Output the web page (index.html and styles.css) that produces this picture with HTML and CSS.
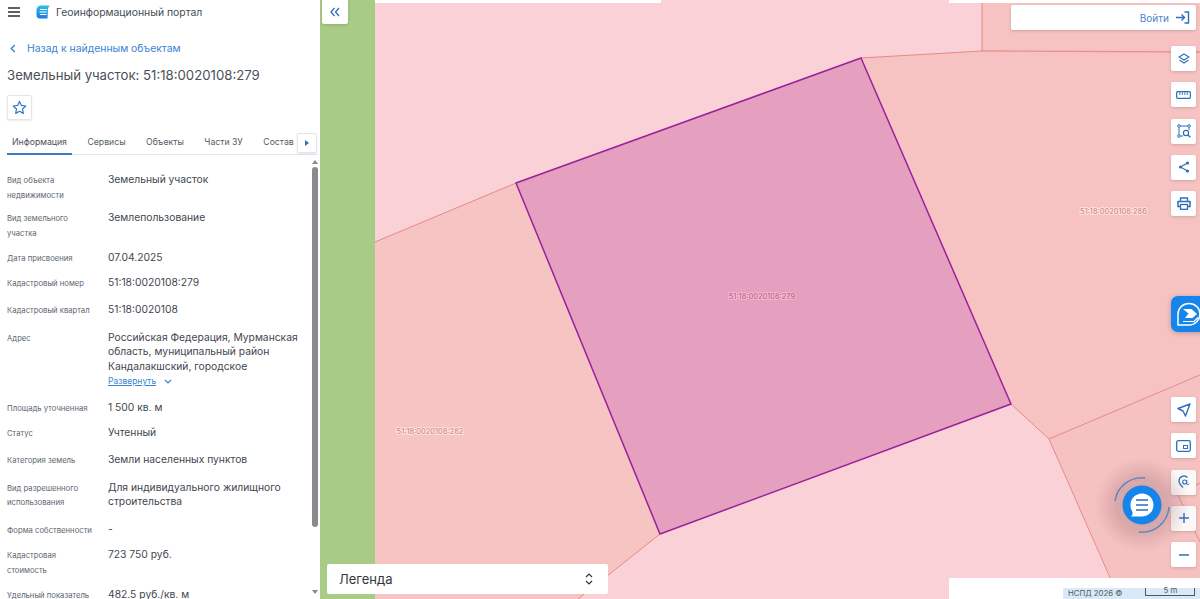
FILE: index.html
```html
<!DOCTYPE html><html lang="ru">
<head>
  <meta charset="UTF-8">
  <meta name="viewport" content="width=device-width, initial-scale=1">
  <title>Геоинформационный портал</title>
  <link rel="stylesheet" href="styles.css">
</head>
<body>
  <div class="app">
    <aside class="sidebar">
      <header class="topbar">
        <svg class="burger" viewBox="0 0 12 10" width="12" height="10"><path d="M0 1h12M0 5h12M0 9h12" stroke="#2b2f33" stroke-width="1.4"/></svg>
        <svg class="logo" viewBox="0 0 14 14" width="14" height="14">
          <defs><linearGradient id="lg" x1="0" y1="0" x2="0" y2="1"><stop offset="0" stop-color="#29c4e0"/><stop offset="1" stop-color="#1a78e0"/></linearGradient></defs>
          <path d="M5 .5h8.500L12 3.500 11.500 13.500H4C1.500 13.500.5 12 .5 10V5C.5 2.500 2.500.5 5 .5z" fill="url(#lg)"/>
          <path d="M4 4.500h7M3.500 7h7M4 9.500h6.500" stroke="#fff" stroke-width="1.100"/>
        </svg>
        <span class="portal-name">Геоинформационный портал</span>
      </header>

      <a class="back" href="#">
        <svg viewBox="0 0 6 10" width="6" height="9"><path d="M5 1 1 5l4 4" fill="none" stroke="#3a84d2" stroke-width="1.500"/></svg>
        Назад к найденным объектам
      </a>
      <h1 class="title">Земельный участок: 51:18:0020108:279</h1>
      <button class="star">
        <svg viewBox="0 0 16 16" width="15" height="15"><path d="M8 1.500l2 4.300 4.700.6-3.500 3.200.9 4.700L8 12l-4.100 2.300.9-4.700L1.300 6.400 6 5.800z" fill="none" stroke="#2f78c8" stroke-width="1.300" stroke-linejoin="round"/></svg>
      </button>

      <nav class="tabs">
        <span class="tab tab-active">Информация</span>
        <span class="tab">Сервисы</span>
        <span class="tab">Объекты</span>
        <span class="tab">Части ЗУ</span>
        <span class="tab">Состав</span>
        <button class="tab-next"><svg viewBox="0 0 4 6" width="4" height="6"><path d="M0 0l4 3-4 3z" fill="#2f6fb8"/></svg></button>
      </nav>

      <section class="info">
        <div class="row row-tight"><div class="label">Вид объекта недвижимости</div><div class="value">Земельный участок</div></div>
        <div class="row row-tight"><div class="label">Вид земельного участка</div><div class="value">Землепользование</div></div>
        <div class="row row-tight"><div class="label">Дата присвоения</div><div class="value">07.04.2025</div></div>
        <div class="row"><div class="label">Кадастровый номер</div><div class="value">51:18:0020108:279</div></div>
        <div class="row row-loose"><div class="label">Кадастровый квартал</div><div class="value">51:18:0020108</div></div>
        <div class="row row-tight">
          <div class="label">Адрес</div>
          <div class="value">Российская Федерация, Мурманская область, муниципальный район Кандалакшский, городское
            <a class="expand" href="#"><u>Развернуть</u><svg viewBox="0 0 8 5" width="8" height="5"><path d="M1 1l3 3 3-3" fill="none" stroke="#3a84d2" stroke-width="1.200"/></svg></a>
          </div>
        </div>
        <div class="row row-tight"><div class="label">Площадь уточненная</div><div class="value">1 500 кв. м</div></div>
        <div class="row"><div class="label">Статус</div><div class="value">Учтенный</div></div>
        <div class="row row-loose"><div class="label">Категория земель</div><div class="value">Земли населенных пунктов</div></div>
        <div class="row row-loose"><div class="label">Вид разрешенного использования</div><div class="value">Для индивидуального жилищного строительства</div></div>
        <div class="row row-tight"><div class="label">Форма собственности</div><div class="value">-</div></div>
        <div class="row row-tight"><div class="label">Кадастровая стоимость</div><div class="value">723 750 руб.</div></div>
        <div class="row"><div class="label">Удельный показатель</div><div class="value">482.5 руб./кв. м</div></div>
      </section>
      <div class="scroll-thumb"></div>
      <svg class="scroll-up" viewBox="0 0 6 4" width="6" height="4"><path d="M3 0l3 4H0z" fill="#8a8a8e"/></svg>
      <svg class="scroll-down" viewBox="0 0 6 4" width="6" height="4"><path d="M0 0h6L3 4z" fill="#8a8a8e"/></svg>
    </aside>

    <main class="map">
      <svg class="map-canvas" viewBox="320 0 880 599" width="880" height="599">
        <rect x="320" y="0" width="880" height="599" fill="#f9d1d6"/>
        <rect x="320" y="0" width="55" height="599" fill="#a8cc85"/>
        <path d="M375 242 516 183 660 534 578 599H375z" fill="#f6c4c2"/>
        <path d="M861 58 982 51 1200 52V375L1049 439 1011 404z" fill="#f6c3c2"/>
        <path d="M982 0H1200V52L982 51z" fill="#f6c3c2"/>
        <path d="M1049 439 1200 375V599H1120z" fill="#f6c2c1"/>
        <g fill="none" stroke="#e58a85" stroke-width="1">
          <path d="M375 242 516 183"/>
          <path d="M660 534 578 599"/>
          <path d="M861 58 982 51V0"/>
          <path d="M1011 404 1049 439 1200 375"/>
          <path d="M1049 439 1112 582"/>
          <path d="M1178 495 1200 542M1178 495 1200 483"/>
        </g>
        <path d="M982 51 1200 52" stroke="#ee8f8d" stroke-width="1.300"/>
        <path d="M861 58 1011 404 660 534 516 183z" fill="#e6a0bf" stroke="#9a209c" stroke-width="1.500"/>
        <text class="map-label label-main" x="762" y="299">51:18:0020108:279</text>
        <text class="map-label" x="1113.500" y="214">51:18:0020108:286</text>
        <text class="map-label" x="430" y="434">51:18:0020108:282</text>
      </svg>

      <div class="strip strip-left"></div>
      <div class="strip strip-right"></div>

      <button class="collapse">
        <svg viewBox="0 0 10 10" width="10" height="10"><path d="M4.500 1 1 5l3.500 4M9 1 5.500 5 9 9" fill="none" stroke="#2f6fb8" stroke-width="1.300"/></svg>
      </button>

      <a class="login" href="#">Войти
        <svg viewBox="0 0 14 13" width="14" height="13"><path d="M8.500 1h4v11h-4" fill="none" stroke="#2f6fb8" stroke-width="1.400"/><path d="M0 6.500h8.500M5.500 3.500l3 3-3 3" fill="none" stroke="#2f6fb8" stroke-width="1.400"/></svg>
      </a>

      <div class="tools tools-top">
        <button class="tool"><svg viewBox="0 0 12 12" width="12" height="12"><path d="M6 1l5 3-5 3-5-3zM1.500 7 6 10l4.500-3" fill="none" stroke="#2f6fb8" stroke-width="1.100"/></svg></button>
        <button class="tool"><svg viewBox="0 0 16 10" width="15" height="10"><rect x=".7" y="1.500" width="14.600" height="7" rx="1" fill="none" stroke="#2f6fb8" stroke-width="1.300"/><path d="M4 2v3M6.700 2v3M9.400 2v3M12 2v3" stroke="#2f6fb8"/></svg></button>
        <button class="tool"><svg viewBox="0 0 14 14" width="14" height="14"><g fill="none" stroke="#2f6fb8"><circle cx="2" cy="2" r="1.300"/><circle cx="12" cy="2" r="1.300"/><circle cx="2" cy="12" r="1.300"/><path d="M3.500 2h7M2 3.500v7M12 3.500V6M3.500 12H6"/><circle cx="9" cy="9" r="2.600" stroke-width="1.200"/><path d="M11 11l2.300 2.300" stroke-width="1.300"/></g></svg></button>
        <button class="tool"><svg viewBox="0 0 12 12" width="12" height="12"><path d="M9.500 2 2.500 6l7 4" fill="none" stroke="#2f6fb8" stroke-width="1.100"/><circle cx="9.500" cy="2" r="1.600" fill="#2f6fb8"/><circle cx="2.500" cy="6" r="1.600" fill="#2f6fb8"/><circle cx="9.500" cy="10" r="1.600" fill="#2f6fb8"/></svg></button>
        <button class="tool"><svg viewBox="0 0 14 13" width="14" height="13"><path d="M3.500 4V1h7v3" fill="none" stroke="#2f6fb8" stroke-width="1.300"/><path d="M3 9.500H1V4.500h12v5h-2" fill="none" stroke="#2f6fb8" stroke-width="1.500"/><rect x="3.500" y="7.500" width="7" height="4.800" fill="none" stroke="#2f6fb8" stroke-width="1.300"/></svg></button>
      </div>

      <div class="brand-tab">
        <svg viewBox="0 0 26 26" width="26" height="26">
          <path d="M3 24V13C3 7 8 2.500 14 2.500S25 7 25 13 20 24 14 24z" fill="none" stroke="#fff" stroke-width="1.500"/>
          <path d="M8 8h8.500l5.500 5-4.500 4H10l3.500-4.500z" fill="#fff"/>
          <path d="M8 20.500h11l4-4" fill="none" stroke="#fff" stroke-width="1.200"/>
        </svg>
      </div>

      <div class="tools tools-bottom">
        <button class="tool"><svg viewBox="0 0 14 14" width="14" height="14"><path d="M13 1 1 5.500 6 8l2.500 5z" fill="none" stroke="#2f6fb8" stroke-width="1.400" stroke-linejoin="round"/></svg></button>
        <button class="tool"><svg viewBox="0 0 15 12" width="15" height="12"><rect x=".7" y=".7" width="13.600" height="10.600" rx="1.500" fill="none" stroke="#2f6fb8" stroke-width="1.300"/><rect x="7.500" y="5.500" width="4" height="3" fill="none" stroke="#2f6fb8"/></svg></button>
        <button class="tool tool-soft"><svg viewBox="0 0 12 14" width="12" height="14"><path d="M9.500 2.500A5 5 0 0 0 1 6c0 2.500 2 4.500 4 6.500" fill="none" stroke="#2f6fb8" stroke-width="1.300"/><circle cx="6.700" cy="7" r="2" fill="none" stroke="#2f6fb8" stroke-width="1.100"/><path d="M8.700 5v3.500c0 1.500 2 1.500 2.300.2" fill="none" stroke="#2f6fb8"/></svg></button>
        <button class="tool tool-soft"><svg viewBox="0 0 10 10" width="10" height="10"><path d="M5 0v10M0 5h10" stroke="#2f6fb8" stroke-width="1.400"/></svg></button>
        <button class="tool"><svg viewBox="0 0 10 2" width="10" height="2"><path d="M0 1h10" stroke="#2f6fb8" stroke-width="1.500"/></svg></button>
      </div>

      <div class="chat">
        <svg viewBox="0 0 64 64" width="64" height="64">
          <circle cx="32" cy="32" r="23" fill="none" stroke="#c9b6bc" stroke-width="1"/>
          <path d="M5 28A27 27 0 0 1 35 5" fill="none" stroke="#4f82c8" stroke-width="1.300"/>
          <path d="M59 34A27 27 0 0 1 29 59" fill="none" stroke="#4f82c8" stroke-width="1.300"/>
          <circle cx="32" cy="32" r="19.500" fill="#1685ea"/>
          <path d="M32 20.500c6.600 0 11.500 5 11.500 11.500S38.600 43.500 32 43.500H21c1.500-1.300 1.800-2.500 1.500-4.500-1.300-2-2-4.300-2-7 0-6.500 5-11.500 11.500-11.500z" fill="#fff"/>
          <path d="M26 27h12M26 32h12M26 37h12" stroke="#2f6fb8" stroke-width="1.700"/>
        </svg>
      </div>

      <div class="legend">
        <span>Легенда</span>
        <svg viewBox="0 0 8 14" width="8" height="14"><path d="M1 5l3-3 3 3M1 9l3 3 3-3" fill="none" stroke="#33373b" stroke-width="1.200"/></svg>
      </div>

      <div class="attribution">
        <span>НСПД 2026 ©</span>
        <span class="scale">5 m</span>
      </div>
    </main>
  </div>
</body>
</html>
```

FILE: styles.css
```css
:root {
  --text-color: #3f4750;
  --label-color: #5d6670;
  --link-color: #3a84d2;
  --btn-shadow: 0 1px 3px rgba(90, 70, 80, 0.25);
}
* { box-sizing: border-box; margin: 0; padding: 0; }
html, body { height: 100%; overflow: hidden; }
body {
  font-family: Inter, "Noto Sans", sans-serif;
  color: var(--text-color);
  background: #fff;
}
button {
  border: none;
  background: #fff;
  font: inherit;
  display: flex;
  align-items: center;
  justify-content: center;
}
a { text-decoration: none; color: var(--link-color); }

.app { display: flex; height: 599px; }

/* left panel */
.sidebar {
  position: relative;
  width: 320px;
  flex: none;
  background: #fff;
  display: flex;
  flex-direction: column;
  overflow: hidden;
}
.topbar {
  display: flex;
  align-items: center;
  height: 24px;
  padding-left: 8px;
}
.burger { margin-right: 16px; }
.logo { margin-right: 6px; }
.portal-name { font-size: 10.400px; color: #444c55; }
.back {
  display: flex;
  align-items: center;
  gap: 11px;
  margin: 17px 0 0 10px;
  height: 14px;
  font-size: 10.400px;
}
.title {
  margin: 11px 0 0 7px;
  font-size: 13.200px;
  line-height: 18px;
  font-weight: 400;
  color: #4a5058;
  white-space: nowrap;
}
.star {
  width: 25px;
  height: 25px;
  flex: none;
  margin: 11px 0 0 7px;
  border: 1px solid #e2e6ea;
  border-radius: 2px;
  box-shadow: 0 1px 2px rgba(0, 0, 0, 0.08);
}
.tabs {
  position: relative;
  display: flex;
  gap: 10.500px;
  height: 35px;
  flex: none;
  margin: 0 2px 0 7px;
  padding-top: 15px;
  border-bottom: 1px solid #e6e9ec;
}
.tab {
  padding: 0 5px;
  font-size: 8.700px;
  line-height: 14px;
  height: 20px;
  color: #555d66;
  white-space: nowrap;
}
.tab-active { border-bottom: 2px solid #3a7cc4; color: #4a525b; }
.tab-next {
  position: absolute;
  right: 1px;
  top: 13px;
  width: 20px;
  height: 20px;
  border: 1px solid #e2e6ea;
  border-radius: 2px;
  box-shadow: 0 1px 2px rgba(0, 0, 0, 0.1);
}
.info { padding: 17px 20px 0 7px; flex: 1; overflow: hidden; }
.row {
  display: grid;
  grid-template-columns: 101px 1fr;
  padding-bottom: 12.500px;
}
.row-tight { padding-bottom: 10.500px; }
.row-loose { padding-bottom: 13.500px; }
.row:first-child { padding-bottom: 9px; }
.label {
  font-size: 7.700px;
  line-height: 14.500px;
  margin: 2px 0 -2px;
  padding-right: 14px;
  color: var(--label-color);
}
.value { font-size: 10.300px; line-height: 14.500px; }
.expand {
  display: flex;
  align-items: center;
  gap: 8px;
  font-size: 8.500px;
  line-height: 16px;
}
.scroll-thumb {
  position: absolute;
  left: 312px;
  top: 167px;
  width: 6px;
  height: 360px;
  border-radius: 3px;
  background: #8a8a8e;
}
.scroll-up { position: absolute; left: 312px; top: 160px; }
.scroll-down { position: absolute; left: 312px; top: 590px; }

/* map */
.map {
  position: relative;
  flex: 1;
  overflow: hidden;
}
.map-canvas { position: absolute; inset: 0; display: block; }
.map-label {
  font-family: Inter, sans-serif;
  font-size: 7.500px;
  text-anchor: middle;
  fill: #cf7f72;
  stroke: rgba(255, 235, 230, 0.75);
  stroke-width: 2px;
  paint-order: stroke;
}
.label-main { fill: #b8607f; stroke: rgba(245, 190, 215, 0.8); }
.strip { position: absolute; background: #fff; }
.strip-left { left: 55px; top: 0; width: 286px; height: 3px; }
.strip-right { left: 629px; top: 0; width: 251px; height: 3px; }
.collapse {
  position: absolute;
  left: 2px;
  top: 0;
  width: 26px;
  height: 24px;
  border-radius: 0 0 2px 2px;
  box-shadow: var(--btn-shadow);
}
.login {
  position: absolute;
  left: 691px;
  top: 5px;
  width: 185px;
  height: 25px;
  padding-right: 6px;
  display: flex;
  align-items: center;
  justify-content: flex-end;
  gap: 7px;
  background: #fff;
  border-radius: 2px;
  box-shadow: var(--btn-shadow);
  font-size: 10px;
  color: #4a86cc;
}
.tools {
  position: absolute;
  left: 851px;
  display: flex;
  flex-direction: column;
  gap: 11.300px;
}
.tools-top { top: 46px; }
.tools-bottom { top: 397px; }
.tool {
  width: 25px;
  height: 25px;
  border-radius: 2px;
  box-shadow: var(--btn-shadow);
}
.tool-soft { background: #fbf8f8; }
.brand-tab {
  position: absolute;
  left: 851px;
  top: 296px;
  width: 32px;
  height: 36px;
  padding: 5px 0 0 4px;
  border-radius: 7px 0 0 7px;
  background: #1685ea;
  box-shadow: 0 1px 5px rgba(60, 60, 90, 0.35);
}
.chat {
  position: absolute;
  left: 790px;
  top: 473px;
  width: 64px;
  height: 64px;
}
.chat::before {
  content: "";
  position: absolute;
  inset: -16px;
  border-radius: 50%;
  background: radial-gradient(circle, rgba(150, 100, 110, 0.3) 35%, rgba(150, 100, 110, 0) 70%);
}
.chat svg { position: relative; display: block; }
.legend {
  position: absolute;
  left: 7px;
  top: 564px;
  width: 281px;
  height: 30px;
  padding: 0 15px 0 12px;
  display: flex;
  align-items: center;
  justify-content: space-between;
  background: #fff;
  border-radius: 2px;
  font-size: 13px;
  color: #33373b;
}
.attribution {
  position: absolute;
  left: 629px;
  top: 578px;
  width: 251px;
  height: 21px;
  padding: 10px 0 0 119px;
  display: flex;
  gap: 23px;
  background: #fff linear-gradient(#fff 10px, #d9e9f7 10px) right top / 137px 100% no-repeat;
  font-size: 7.800px;
  line-height: 11px;
  color: #555d66;
}
.scale {
  width: 50px;
  height: 8px;
  border: 1px solid #555;
  border-top: none;
  line-height: 5px;
  text-align: center;
}
```
